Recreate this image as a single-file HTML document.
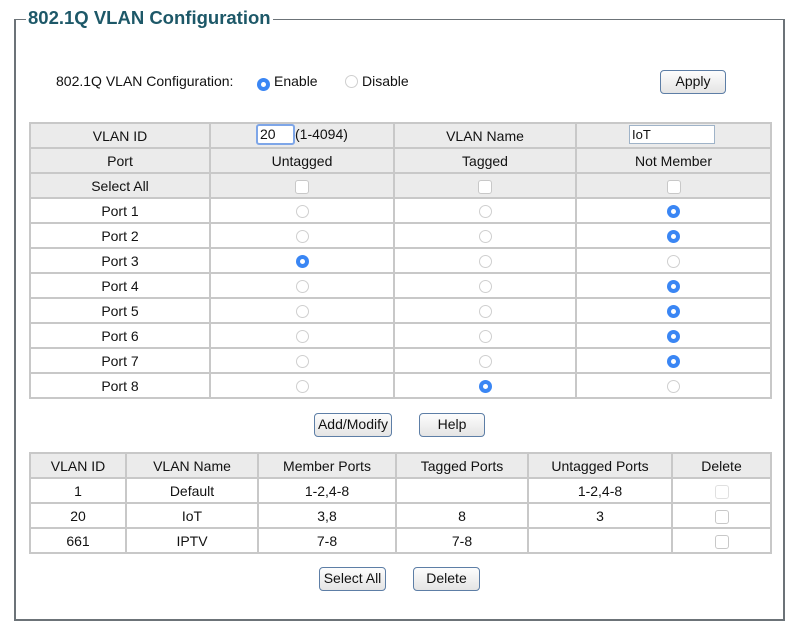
<!DOCTYPE html>
<html><head><meta charset="utf-8">
<style>
*{box-sizing:border-box;margin:0;padding:0}
body{width:800px;height:638px;background:#fff;font-family:"Liberation Sans",Arial,sans-serif;font-size:14px;color:#111;position:relative;overflow:hidden}
.fs{position:absolute;left:14px;top:19px;width:771px;height:602px;border:2px solid #6c7378;border-top:1px solid #6c7378}
.title{position:absolute;left:26px;top:7px;background:#fff;padding:0 2px;font-size:18.5px;font-weight:bold;color:#1d5868}
.a{position:absolute}
table{position:absolute;border-collapse:collapse;table-layout:fixed}
td{border:2px solid #c8c8c8;height:25px;text-align:center;vertical-align:middle;padding:0;line-height:18px}
tr.g td{background:#ebebeb}
.r{display:inline-block;width:13px;height:13px;border-radius:50%;border:1px solid #cfcfcf;background:#fff;vertical-align:middle}
.r.on{border:none;background:#3a86f4;position:relative}
.r.on:after{content:"";position:absolute;left:4px;top:4px;width:5px;height:5px;border-radius:50%;background:#fff}
.c{display:inline-block;width:14px;height:14px;border-radius:3px;border:1px solid #c8c8c8;background:#fff;vertical-align:middle}
.c.l{border-color:#e0e0e0}
.btn{position:absolute;height:24px;border:1px solid #5d7ea6;border-radius:4px;background:linear-gradient(#fdfdfd,#e4e4e4);font-size:14px;text-align:center;line-height:21px;color:#111}
</style></head><body>
<div class="fs"></div>
<div class="title">802.1Q VLAN Configuration</div>
<div class="a" style="left:56px;top:73px">802.1Q VLAN Configuration:</div>
<span class="r on a" style="left:257px;top:75px"></span>
<div class="a" style="left:274px;top:73px">Enable</div>
<span class="r a" style="left:345px;top:75px"></span>
<div class="a" style="left:362px;top:73px">Disable</div>
<div class="btn" style="left:660px;top:70px;width:66px">Apply</div>

<table style="left:29px;top:122px;width:741px">
<col style="width:180px"><col style="width:184px"><col style="width:182px"><col style="width:195px">
<tr class="g"><td>VLAN ID</td><td></td><td>VLAN Name</td><td></td></tr>
<tr class="g"><td>Port</td><td>Untagged</td><td>Tagged</td><td>Not Member</td></tr>
<tr class="g"><td>Select All</td><td><span class="c"></span></td><td><span class="c"></span></td><td><span class="c"></span></td></tr>
<tr><td>Port 1</td><td><span class="r"></span></td><td><span class="r"></span></td><td><span class="r on"></span></td></tr>
<tr><td>Port 2</td><td><span class="r"></span></td><td><span class="r"></span></td><td><span class="r on"></span></td></tr>
<tr><td>Port 3</td><td><span class="r on"></span></td><td><span class="r"></span></td><td><span class="r"></span></td></tr>
<tr><td>Port 4</td><td><span class="r"></span></td><td><span class="r"></span></td><td><span class="r on"></span></td></tr>
<tr><td>Port 5</td><td><span class="r"></span></td><td><span class="r"></span></td><td><span class="r on"></span></td></tr>
<tr><td>Port 6</td><td><span class="r"></span></td><td><span class="r"></span></td><td><span class="r on"></span></td></tr>
<tr><td>Port 7</td><td><span class="r"></span></td><td><span class="r"></span></td><td><span class="r on"></span></td></tr>
<tr><td>Port 8</td><td><span class="r"></span></td><td><span class="r on"></span></td><td><span class="r"></span></td></tr>
</table>
<div class="a" style="left:256px;top:124px;width:39px;height:21px;border:2px solid #7ea6e8;border-radius:3px;background:#fff;line-height:17px;padding-left:2px">20</div>
<div class="a" style="left:295px;top:126px">(1-4094)</div>
<div class="a" style="left:629px;top:125px;width:86px;height:19px;border:1px solid #9fb3c8;background:#fff;line-height:17px;padding-left:2px;font-size:13px">IoT</div>

<div class="btn" style="left:314px;top:413px;width:78px">Add/Modify</div>
<div class="btn" style="left:419px;top:413px;width:66px">Help</div>

<table style="left:29px;top:452px;width:741px">
<col style="width:96px"><col style="width:132px"><col style="width:138px"><col style="width:132px"><col style="width:144px"><col style="width:99px">
<tr class="g"><td>VLAN ID</td><td>VLAN Name</td><td>Member Ports</td><td>Tagged Ports</td><td>Untagged Ports</td><td>Delete</td></tr>
<tr><td>1</td><td>Default</td><td>1-2,4-8</td><td></td><td>1-2,4-8</td><td><span class="c l"></span></td></tr>
<tr><td>20</td><td>IoT</td><td>3,8</td><td>8</td><td>3</td><td><span class="c"></span></td></tr>
<tr><td>661</td><td>IPTV</td><td>7-8</td><td>7-8</td><td></td><td><span class="c"></span></td></tr>
</table>

<div class="btn" style="left:319px;top:567px;width:67px">Select All</div>
<div class="btn" style="left:413px;top:567px;width:67px">Delete</div>
</body></html>
